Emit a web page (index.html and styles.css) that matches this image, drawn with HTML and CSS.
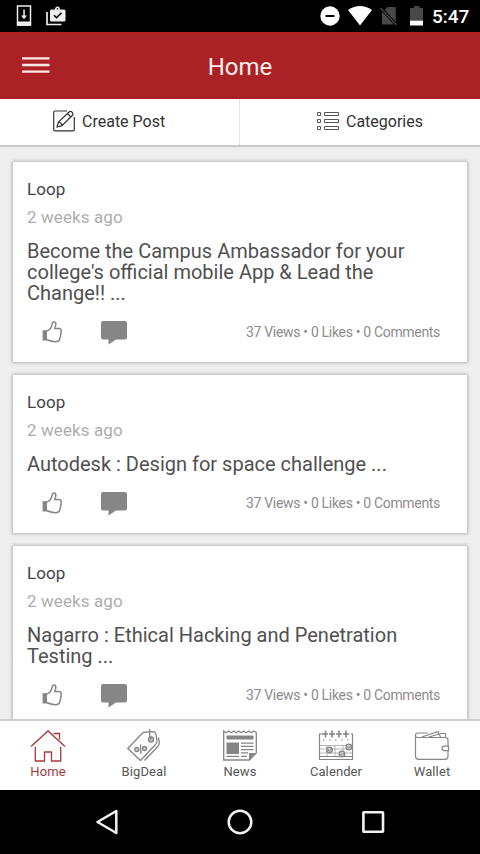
FILE: index.html
```html
<!DOCTYPE html>
<html lang="en">
<head>
<meta charset="utf-8">
<title>Home</title>
<link rel="stylesheet" href="styles.css">
</head>
<body>
<svg width="0" height="0" class="defs">
  <symbol id="thumb" viewBox="0 0 20 22">
    <path d="M.6 9.200h4.400v10.300H.6z" fill="#858585"/>
    <path d="M5 10C8 8.800 9.600 6 10.200 2.800C10.500.3 14.200.5 13.800 3.700C13.700 5 13 6.300 12.700 7.600H17.300C19 7.700 19.500 9.200 18.900 10.400C19.200 11.500 19 12.700 18.600 13.500C18.800 14.700 18.500 15.800 18 16.600C18 18.600 17 20.200 15 20.500C11.500 21 8 20 5 18.800" fill="none" stroke="#858585" stroke-width="1.500" stroke-linejoin="round"/>
  </symbol>
  <symbol id="chat" viewBox="0 0 26 24">
    <path d="M2 0h22q2 0 2 2v14.500q0 2-2 2H15L7.500 23.500V18.500H2q-2 0-2-2V2q0-2 2-2z" fill="#868686"/>
  </symbol>
</svg>
<div class="screen">
  <div class="status">
    <div class="status-group left">
      <svg width="16" height="22" viewBox="0 0 16 22"><path d="M1.500 1h13v19h-13z" fill="none" stroke="#eee" stroke-width="1.500"/><path d="M1 16.500h14V20.700H1z" fill="#eee"/><path d="M7.300 4.500h1.500v6H11l-3 3.700-3-3.700h2.300z" fill="#eee"/></svg>
      <svg width="20" height="20" viewBox="0 0 20 20"><path d="M1 6v12.500h14.500" fill="none" stroke="#eee" stroke-width="1.700"/><path d="M5 3.500h4q.2-3 2.500-3t2.500 3h4q1.500 0 1.500 1.500v9q0 1.500-1.500 1.500H5.500Q4 15.500 4 14V5q0-1.500 1-1.500z" fill="#eee"/><circle cx="11.500" cy="2.800" r=".8" fill="#000"/><path d="m8 9.200 2.500 2.500 5-5" fill="none" stroke="#000" stroke-width="1.600"/></svg>
    </div>
    <div class="status-group right">
      <svg width="20" height="20" viewBox="0 0 20 20"><circle cx="10" cy="10" r="9.700" fill="#fff"/><path d="M5.500 10h9" stroke="#000" stroke-width="2"/></svg>
      <svg width="24" height="20" viewBox="0 0 24 20"><path d="M0 4Q12-4 24 4L12 19.500z" fill="#fff"/></svg>
      <svg width="18" height="20" viewBox="0 0 18 20"><path d="M7.500 1h8.200v17.500H2V7z" fill="#484848"/><path d="M.5 1.500l16 17.500" stroke="#000" stroke-width="3"/><path d="M.5 2l16 17" stroke="#484848" stroke-width="1.200"/></svg>
      <svg width="14" height="20" viewBox="0 0 14 20"><path d="M0 2h4V0h5.500v2H13v12H0z" fill="#484848"/><path d="M0 14.500h13v5H0z" fill="#fff"/></svg>
      <span class="clock">5:47</span>
    </div>
  </div>
  <header class="appbar">
    <svg class="menu" width="28" height="18" viewBox="0 0 28 18"><path d="M0 2.300h27.500M0 9h27.500M0 15.600h27.500" stroke="#ffe9e5" stroke-width="2.300"/></svg>
    <h1>Home</h1>
  </header>
  <div class="actions">
    <div class="action create">
      <svg width="22" height="22" viewBox="0 0 22 22" fill="none" stroke="#333" stroke-width="1.200"><path d="M14 1H2Q.7 1 .7 2.300V19.500Q.7 20.900 2 20.900H20Q21.300 20.900 21.300 19.500V7"/><path d="M4 17 5.500 12 16 2Q17.500.8 19.200 2.300 20.800 4 19.300 5.500L9 15.700zM5.500 12q3 .5 3.500 3.700M14.500 3.500l3.500 3.500"/></svg>
      <span>Create Post</span>
    </div>
    <div class="action cats">
      <svg width="22" height="19" viewBox="0 0 22 19" fill="none" stroke="#555" stroke-width="1"><path d="M.5.500h3v3h-3zM7.500.5h14v3h-14zM.5 7.500h3v3h-3zM7.500 7.500h14v3h-14zM.5 14.500h3v3h-3zM7.500 14.500h14v3h-14z"/></svg>
      <span>Categories</span>
    </div>
  </div>
  <main class="feed">
    <article class="card">
      <div class="author">Loop</div>
      <div class="time">2 weeks ago</div>
      <h2>Become the Campus Ambassador for your<br>college's official mobile App &amp; Lead the<br>Change!! ...</h2>
      <div class="foot"><svg class="thumb"><use href="#thumb"/></svg><svg class="chat"><use href="#chat"/></svg><span class="stats">37 Views • 0 Likes • 0 Comments</span></div>
    </article>
    <article class="card">
      <div class="author">Loop</div>
      <div class="time">2 weeks ago</div>
      <h2>Autodesk : Design for space challenge ...</h2>
      <div class="foot"><svg class="thumb"><use href="#thumb"/></svg><svg class="chat"><use href="#chat"/></svg><span class="stats">37 Views • 0 Likes • 0 Comments</span></div>
    </article>
    <article class="card">
      <div class="author">Loop</div>
      <div class="time">2 weeks ago</div>
      <h2>Nagarro : Ethical Hacking and Penetration<br>Testing ...</h2>
      <div class="foot"><svg class="thumb"><use href="#thumb"/></svg><svg class="chat"><use href="#chat"/></svg><span class="stats">37 Views • 0 Likes • 0 Comments</span></div>
    </article>
  </main>
  <nav class="tabs">
    <div class="tab active">
      <svg viewBox="0 0 36 34" fill="none" stroke="#a9383c" stroke-width="1.300"><path d="M1 17.500 18 2l17 15.500M23.500 4.500h6v6M5.300 18v14h9.200V23h7v9h9.200V18"/></svg>
      <span>Home</span>
    </div>
    <div class="tab">
      <svg viewBox="0 0 36 34" fill="none" stroke="#858585" stroke-width="1.300"><path d="M1.800 19.500 16 4.500Q17.500 3 20 3L27 2.700Q29.500 2.700 30 5.500L31 11.500Q31 14 29.500 15.500L14.500 31.500z"/><path d="M32.500 8.500l.8 5q0 2.500-1.500 4L18.500 31.500"/><circle cx="25" cy="10.500" r="2.600" fill="#bbb"/><path d="M23.700 0v7.500l1.800 2.500M14.500 15.500l.5 9.500"/><circle cx="10.800" cy="20.500" r="2" fill="#ccc"/><circle cx="18.500" cy="19.500" r="2" fill="#ccc"/></svg>
      <span>BigDeal</span>
    </div>
    <div class="tab">
      <svg viewBox="0 0 36 34" fill="none" stroke="#858585" stroke-width="1.300"><path d="M1.700 31V2l2.500 1.700L6.700 2l2.500 1.700L11.700 2l2.500 1.700L16.700 2l2.500 1.700L21.700 2l2.500 1.700L26.700 2l2.500 1.700L31.700 2l2.600 1.700V24l-7 7z"/><path d="M4.500 6.500h27v4h-27zM4.500 13.500h12.500v11.500H4.500zM27 31v-7h7z" fill="#858585" stroke="none"/><path d="M19 14.200h12.500M19 17.400h12.500M19 20.600h12.500M19 23.800h7M4.500 27.300h12.500M19 27.300h6"/></svg>
      <span>News</span>
    </div>
    <div class="tab">
      <svg viewBox="0 0 36 34" fill="none" stroke="#858585" stroke-width="1"><path d="M4 5H1.500v25.500h33V5h-2M1.500 27.500h33" stroke-width="1.200"/><path d="M1.500 16.500h33M1.500 20h33M1.500 24h33M9 16v11M17 16v11M25 16v11" stroke="#a5a5a5" stroke-width=".8"/><path d="M5 11h1.500M11 11h1.500M17 11h1.500M23 11h1.500M29 11h1.500"/><path d="M4 5h6M11 5h6M18 5h6M25 5h6M7.500 1.500v7M14 1.500v7M21 1.500v7M28 1.500v7" stroke-width="1.600"/><g fill="#ccc" stroke-width="1.300"><circle cx="11.500" cy="21" r="2.800"/><circle cx="24" cy="25" r="2.800"/><circle cx="30.800" cy="18" r="2.800"/></g><path d="m10 21 1.200 1.200 2.300-2.500M22.500 25l1.200 1.200L26 23.700M29.300 18l1.200 1.200 2.300-2.500"/></svg>
      <span>Calender</span>
    </div>
    <div class="tab">
      <svg viewBox="0 0 36 34" fill="none" stroke="#858585" stroke-width="1.200"><path d="M34 17V11Q34 8.500 31 8.500H3.500Q1.500 8.500 1.500 6.200 1.500 4 3.500 4H14M1.500 6V27Q1.500 30.300 5 30.300H31Q34 30.300 34 27V21.500M34.500 17.200h-4q-2.500 0-2.500 2.200t2.500 2.200h4zM8 8 24 2.500l2.500 5.500M15 8 25 5M26 4.500h5.500v4"/></svg>
      <span>Wallet</span>
    </div>
  </nav>
  <div class="sysnav">
    <svg width="24" height="28" viewBox="0 0 24 28"><path d="M2.500 14 21.300 3v22z" fill="none" stroke="#f2f2f2" stroke-width="2.500" stroke-linejoin="round"/></svg>
    <svg width="28" height="28" viewBox="0 0 28 28"><circle cx="14" cy="14" r="11.300" fill="none" stroke="#f2f2f2" stroke-width="2.500"/></svg>
    <svg width="24" height="28" viewBox="0 0 24 28"><rect x="2.400" y="4.200" width="19.600" height="19.600" rx=".5" fill="none" stroke="#f2f2f2" stroke-width="2.600"/></svg>
  </div>
</div>
</body>
</html>
```

FILE: styles.css
```css
* { box-sizing: border-box; }
body { margin: 0; font-family: Roboto, "Liberation Sans", sans-serif; background: #000; }
svg { display: block; flex: none; }
.defs { position: absolute; }
.screen { width: 480px; height: 854px; display: flex; flex-direction: column; overflow: hidden; }

.status { height: 32px; flex: none; background: #000; display: flex; justify-content: space-between; align-items: center; padding: 0 11px 0 16px; }
.status-group { display: flex; align-items: center; }
.left { gap: 14px; }
.right svg:nth-of-type(1) { margin-right: 8px; }
.right svg:nth-of-type(2) { margin-right: 8px; }
.right svg:nth-of-type(3) { margin-right: 12px; }
.clock { margin-left: 8px; padding-top: 1px; color: #fff; font-size: 19px; font-weight: 500; line-height: 31px; width: 37px; white-space: nowrap; }

.appbar { height: 67px; flex: none; background: #ab2226; border-top: 2px solid #b32224; display: grid; grid-template-columns: 80px 1fr 80px; align-items: center; }
.menu { margin: 0 0 3px 22px; }
.appbar h1 { margin: 1px 0 0; text-align: center; font-size: 24px; font-weight: 400; line-height: 30px; color: #fff0ec; }

.actions { height: 48px; flex: none; display: flex; background: #fff; border-bottom: 2px solid #c9c9c9; }
.action { width: 240px; display: flex; align-items: center; padding-bottom: 2px; font-size: 16px; color: #333; }
.create { padding-left: 53px; gap: 7px; border-right: 1px solid #e4e4e4; }
.cats { padding-left: 77px; gap: 7px; }

.feed { height: 572px; flex: none; background: #eee; padding: 14.600px 13px 0; display: flex; flex-direction: column; gap: 13.400px; overflow: hidden; }
.card { flex: none; background: #fff; padding: 16px 14px 10px; box-shadow: 0 0 3px 1px rgba(0, 0, 0, 0.24); }
.author { font-size: 17px; line-height: 23px; color: #444; letter-spacing: 0.1px; }
.time { margin-top: 5px; font-size: 17px; line-height: 23px; color: #aeaeae; letter-spacing: 0.1px; }
.card h2 { margin: 12px 0 0; font-size: 20px; font-weight: 400; line-height: 21.400px; color: #505050; white-space: nowrap; }
.foot { height: 47px; padding: 8px 13px 0 15px; display: flex; align-items: center; }
.thumb { width: 20px; height: 22px; }
.chat { width: 26px; height: 24px; margin-left: 39px; position: relative; top: 1px; }
.stats { margin-left: auto; font-size: 14px; letter-spacing: -0.320px; line-height: 18px; color: #8c8c8c; white-space: nowrap; }

.tabs { height: 71px; flex: none; background: #fff; border-top: 2px solid #cdcdcd; display: grid; grid-template-columns: repeat(5, 96px); }
.tab { display: flex; flex-direction: column; align-items: center; padding-top: 8px; font-size: 13px; line-height: 16px; color: #555; }
.tab svg { width: 36px; height: 34px; }
.tab span { margin-top: 1px; letter-spacing: 0.1px; }
.tab.active { color: #a9383c; }

.sysnav { height: 64px; flex: none; background: #000; display: flex; justify-content: space-between; align-items: center; padding: 0 95px; }
```
